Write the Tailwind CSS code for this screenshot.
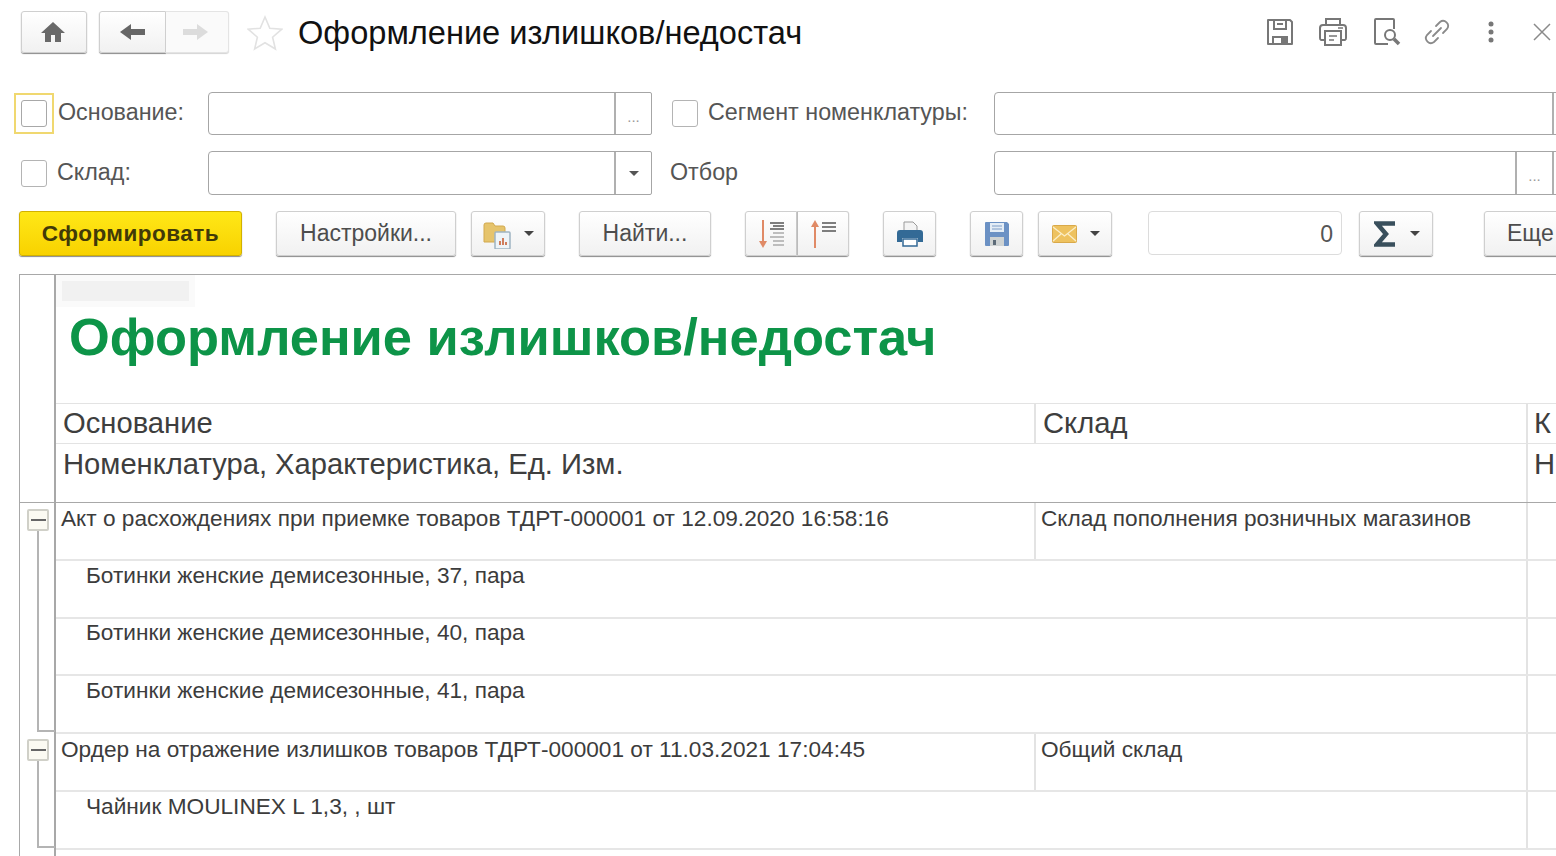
<!DOCTYPE html>
<html lang="ru">
<head>
    <meta charset="UTF-8">
    <meta name="viewport" content="width=device-width, initial-scale=1.0">
    <title>Оформление излишков/недостач</title>
    <script src="https://cdn.jsdelivr.net/npm/@tailwindcss/browser@4"></script>
</head>
<body class="bg-white">
<div class="w-[1556px] h-[856px] overflow-hidden font-['Liberation_Sans',Arial,sans-serif] text-[#3a3a3a]">

    <!-- Заголовок -->
    <div class="h-[92px] pt-[11px] pl-[21px] flex items-start">
        <button class="w-[66px] h-[42px] rounded-[3px] border border-[#cfcfcf] bg-linear-to-b from-white to-[#f1f1f1] shadow-[0_1px_1px_#8a8a8a] flex items-center justify-center pr-[2px]">
            <svg width="26" height="26" viewBox="0 0 26 26"><path d="M13 3 1 14h4v9h6v-7h4v7h6v-9h4z" fill="#696969"/></svg>
        </button>
        <div class="ml-[12px] flex">
            <button class="w-[67px] h-[42px] rounded-l-[3px] border border-[#cfcfcf] bg-linear-to-b from-white to-[#f1f1f1] shadow-[0_1px_1px_#8a8a8a] flex items-center justify-center">
                <svg width="26" height="20" viewBox="0 0 26 20"><path d="M0 10 11 2v5h14v6H11v5z" fill="#666"/></svg>
            </button>
            <button class="w-[63px] h-[42px] rounded-r-[3px] border border-l-0 border-[#e4e4e4] bg-[#fafafa] shadow-[0_1px_1px_#d4d4d4] flex items-center justify-center pr-[4px]">
                <svg width="26" height="20" viewBox="0 0 26 20"><path d="M26 10 15 2v5H1v6h14v5z" fill="#dcdcdc"/></svg>
            </button>
        </div>
        <svg class="ml-[18px] mt-[4px]" width="36" height="36" viewBox="0 0 36 36"><path d="m18 2 4.800 11.200 12 1-9.200 8 2.800 11.800L18 27.700 7.600 34l2.800-11.800-9.200-8 12-1z" fill="none" stroke="#e2e2e2" stroke-width="1.600"/></svg>
        <h1 class="ml-[15px] mt-[2px] text-[32.600px] leading-[40px] text-[#111] whitespace-nowrap">Оформление излишков/недостач</h1>
        <div class="ml-auto flex items-center h-[42px] relative">
            <svg class="absolute left-[-291px] top-[6px]" width="30" height="30" viewBox="0 0 30 30" fill="none" stroke="#777" stroke-width="2"><path d="M3 3h22l2 2v22H3z" stroke-linejoin="round"/><path d="M9 3v9h12V3M12 7h6" /><path d="M8 27v-7h14v7" /><rect x="12" y="22" width="4" height="4" fill="#fff" stroke="none"/><rect x="16" y="21" width="5" height="6" fill="#777" stroke="none"/></svg>
            <svg class="absolute left-[-238px] top-[6px]" width="30" height="30" viewBox="0 0 30 30" fill="none" stroke="#777" stroke-width="2"><path d="M8 8V2h14v6" /><path d="M7 23H3a2 2 0 0 1-1-2V11q0-3 3-3h20q3 0 3 3v10a2 2 0 0 1-1 2h-4" /><rect x="7" y="14" width="16" height="14" /><path d="M11 19h8M11 23h5M20 11h5" stroke-width="1.500"/></svg>
            <svg class="absolute left-[-184px] top-[6px]" width="30" height="30" viewBox="0 0 30 30" fill="none" stroke="#777" stroke-width="2"><path d="M22 12V3q0-1-1-1H4q-1 0-1 1v23q0 1 1 1h12" /><circle cx="18" cy="18" r="5" /><path d="m22 22 5 5" stroke-width="3.500"/></svg>
            <svg class="absolute left-[-134px] top-[6px]" width="30" height="30" viewBox="0 0 30 30" fill="none" stroke="#8a8a8a" stroke-width="1.800" stroke-linecap="round"><path d="M11 19 19 11" /><path d="m14 9 4-4a5 5 0 0 1 7 7l-4 4" /><path d="m16 21-4 4a5 5 0 0 1-7-7l4-4" /></svg>
            <svg class="absolute left-[-75px] top-[8px]" width="20" height="24" viewBox="0 0 20 24" fill="#777"><circle cx="10" cy="5" r="2.500"/><circle cx="10" cy="13" r="2.500"/><circle cx="10" cy="21" r="2.500"/></svg>
            <svg class="absolute left-[-24px] top-[11px]" width="20" height="20" viewBox="0 0 20 20" stroke="#8a8a8a" stroke-width="1.500"><path d="m2 2 16 16M18 2 2 18"/></svg>
        </div>
    </div>

    <!-- Отбор -->
    <div class="h-[59px] flex items-start">
        <div class="ml-[14px] w-[40px] h-[41px] mt-[1px] border-2 border-[#f0d870] flex items-center justify-center shrink-0">
            <span class="block w-[26px] h-[27px] rounded-[3px] border border-[#a8a8a8] bg-white"></span>
        </div>
        <span class="ml-[4px] w-[150px] mt-[7px] text-[23.300px] leading-[27px] text-[#555] shrink-0">Основание:</span>
        <div class="w-[444px] h-[43px] rounded-l-[4px] border border-[#a6a6a6] rounded-r-[2px] flex justify-end shrink-0">
            <div class="w-[37px] border-l-2 border-[#b0b0b0] text-[#999] text-[15px] text-center leading-[48px]">...</div>
        </div>
        <span class="ml-[20px] mt-[8px] block w-[26px] h-[27px] rounded-[3px] border border-[#b4b4b4] shrink-0"></span>
        <span class="ml-[10px] w-[286px] mt-[7px] text-[23.300px] leading-[27px] text-[#555] shrink-0">Сегмент номенклатуры:</span>
        <div class="w-[600px] h-[43px] rounded-l-[4px] border border-[#a6a6a6] flex justify-end shrink-0">
            <div class="w-[41px] border-l-2 border-[#b0b0b0]"></div>
        </div>
    </div>
    <div class="h-[60px] flex items-start">
        <span class="ml-[21px] mt-[9px] block w-[26px] h-[27px] rounded-[3px] border border-[#b4b4b4] shrink-0"></span>
        <span class="ml-[10px] w-[151px] mt-[8px] text-[23.300px] leading-[27px] text-[#555] shrink-0">Склад:</span>
        <div class="w-[444px] h-[44px] rounded-l-[4px] rounded-r-[2px] border border-[#a6a6a6] flex justify-end shrink-0">
            <div class="w-[37px] border-l-2 border-[#b0b0b0] flex items-center justify-center">
                <span class="w-0 h-0 border-x-[5px] border-x-transparent border-t-[5px] border-t-[#555]"></span>
            </div>
        </div>
        <span class="ml-[18px] w-[324px] mt-[8px] text-[23.300px] leading-[27px] text-[#555] shrink-0">Отбор</span>
        <div class="w-[600px] h-[44px] rounded-l-[4px] border border-[#a6a6a6] flex justify-end shrink-0">
            <div class="w-[37px] border-l-2 border-[#b0b0b0] text-[#999] text-[15px] text-center leading-[48px]">...</div>
            <div class="w-[41px] border-l-2 border-[#b0b0b0]"></div>
        </div>
    </div>

    <!-- Командная панель -->
    <div class="h-[63px] pl-[19px] flex items-start">
        <button class="w-[223px] h-[45px] shrink-0 rounded-[3px] border border-[#d2b100] bg-linear-to-b from-[#ffe816] to-[#f8d200] shadow-[0_1px_1px_#8a8a8a] font-bold text-[22.500px] tracking-[0.500px] text-[#413a08]">Сформировать</button>
        <button class="ml-[34px] w-[180px] h-[45px] shrink-0 rounded-[3px] border border-[#cfcfcf] bg-linear-to-b from-white to-[#f1f1f1] shadow-[0_1px_1px_#8a8a8a] text-[23px] text-[#4d4d4d]">Настройки...</button>
        <button class="ml-[15px] w-[74px] h-[45px] shrink-0 rounded-[3px] border border-[#cfcfcf] bg-linear-to-b from-white to-[#f1f1f1] shadow-[0_1px_1px_#8a8a8a] flex items-center pl-[11px] gap-[11px]">
            <svg width="30" height="30" viewBox="0 0 30 30"><path d="M1 6q0-2 2-2h7l2 3h8q2 0 2 2v14H1z" fill="#e6c46c" stroke="#d2a94e"/><rect x="12" y="13" width="15" height="17" rx="1" fill="#eef4f8" stroke="#9fb4c2" stroke-width="1.500"/><path d="M16 26v-4h2v4zM19 26v-7h2v7zM22 26v-3h2v3z" fill="#cf7d5d"/></svg>
            <span class="w-0 h-0 border-x-[5px] border-x-transparent border-t-[5px] border-t-[#444]"></span>
        </button>
        <button class="ml-[34px] w-[132px] h-[45px] shrink-0 rounded-[3px] border border-[#cfcfcf] bg-linear-to-b from-white to-[#f1f1f1] shadow-[0_1px_1px_#8a8a8a] text-[23px] text-[#4d4d4d]">Найти...</button>
        <div class="ml-[34px] flex shrink-0">
            <button class="w-[52px] h-[45px] rounded-l-[3px] border border-[#cfcfcf] bg-linear-to-b from-white to-[#f1f1f1] shadow-[0_1px_1px_#8a8a8a] flex items-center justify-center">
                <svg width="28" height="30" viewBox="0 0 28 30"><path d="M6 1v25" stroke="#e08a66" stroke-width="2"/><path d="m2 22 4 7 4-7z" fill="#e08a66"/><path d="M13 4h14M16 7h11M13 10h14" stroke="#555" stroke-width="1.600"/><path d="M16 14h11M13 18h14M16 22h11M16 26h11" stroke="#aaa" stroke-width="1.600"/></svg>
            </button>
            <button class="w-[52px] h-[45px] rounded-r-[3px] border border-l-[#bbb] border-[#cfcfcf] bg-linear-to-b from-white to-[#f1f1f1] shadow-[0_1px_1px_#8a8a8a] flex items-center justify-center">
                <svg width="28" height="30" viewBox="0 0 28 30"><path d="M6 29V4" stroke="#e08a66" stroke-width="2"/><path d="m2 8 4-7 4 7z" fill="#e08a66"/><path d="M13 4h14M13 8h14M13 12h14" stroke="#555" stroke-width="1.600"/></svg>
            </button>
        </div>
        <button class="ml-[34px] w-[53px] h-[45px] shrink-0 rounded-[3px] border border-[#cfcfcf] bg-linear-to-b from-white to-[#f1f1f1] shadow-[0_1px_1px_#8a8a8a] flex items-center justify-center">
            <svg width="28" height="28" viewBox="0 0 28 28"><path d="M8 12V2h9l4 4v6z" fill="#f4f4f4" stroke="#9a9a9a"/><path d="M1 13q0-3 3-3h20q3 0 3 3v9h-5v-4H6v4H1z" fill="#336a96"/><path d="M7 19h14v7H7z" fill="#fff" stroke="#336a96" stroke-width="1.500"/></svg>
        </button>
        <button class="ml-[34px] w-[53px] h-[45px] shrink-0 rounded-[3px] border border-[#cfcfcf] bg-linear-to-b from-white to-[#f1f1f1] shadow-[0_1px_1px_#8a8a8a] flex items-center justify-center">
            <svg width="26" height="26" viewBox="0 0 26 26"><path d="M1 2q0-1 1-1h21l2 2v21q0 1-1 1H2q-1 0-1-1z" fill="#6b91c4"/><rect x="6" y="2" width="14" height="9" fill="#e4edf6"/><path d="M8 5h10M8 8h10" stroke="#7d9cc6"/><rect x="6" y="16" width="14" height="9" fill="#cfd3d3"/><rect x="9" y="19" width="3" height="5" fill="#5d6b78"/></svg>
        </button>
        <button class="ml-[15px] w-[74px] h-[45px] shrink-0 rounded-[3px] border border-[#cfcfcf] bg-linear-to-b from-white to-[#f1f1f1] shadow-[0_1px_1px_#8a8a8a] flex items-center pl-[13px] gap-[13px]">
            <svg width="25" height="18" viewBox="0 0 25 18"><rect x="0.500" y="0.500" width="24" height="17" rx="1" fill="#eec25f" stroke="#d9a94a"/><path d="m1 2 11.500 9L24 2M1 16l8-7M24 16l-8-7" fill="none" stroke="#fbeec8" stroke-width="1.300"/></svg>
            <span class="w-0 h-0 border-x-[5px] border-x-transparent border-t-[5px] border-t-[#444]"></span>
        </button>
        <div class="ml-[36px] w-[194px] h-[44px] shrink-0 rounded-[4px] border border-[#dcdcdc] text-right pr-[8px] text-[23px] leading-[44px] text-[#555]">0</div>
        <button class="ml-[17px] w-[74px] h-[45px] shrink-0 rounded-[3px] border border-[#cfcfcf] bg-linear-to-b from-white to-[#f1f1f1] shadow-[0_1px_1px_#8a8a8a] flex items-center pl-[14px] gap-[14px]">
            <svg width="22" height="26" viewBox="0 0 22 26"><path d="M21 2.500H3l9 10.500-9 10.500h18" fill="none" stroke="#394f5c" stroke-width="4.500"/></svg>
            <span class="w-0 h-0 border-x-[5px] border-x-transparent border-t-[5px] border-t-[#444]"></span>
        </button>
        <button class="ml-[51px] w-[90px] h-[45px] shrink-0 rounded-[3px] border border-[#cfcfcf] bg-linear-to-b from-white to-[#f1f1f1] shadow-[0_1px_1px_#8a8a8a] text-[23px] text-[#4d4d4d] text-left pl-[22px]">Еще</button>
    </div>

    <!-- Отчет -->
    <div class="ml-[19px] w-[1560px] border-t border-[#a8a8a8]">
        <div class="flex h-[128px]">
            <div class="w-[37px] border-l border-r-2 border-[#a8a8a8] shrink-0"></div>
            <div class="flex-1 relative">
                <div class="w-[139px] h-[32px] bg-[#fafafa] p-[6px]"><div class="h-full bg-[#f1f1f1]"></div></div>
                <div class="mt-[1px] pl-[13px] text-[52.450px] leading-[58px] font-bold text-[#0d9448] whitespace-nowrap">Оформление излишков/недостач</div>
            </div>
        </div>
        <div class="flex h-[41px]">
            <div class="w-[37px] border-l border-r-2 border-[#a8a8a8] shrink-0"></div>
            <div class="flex-1 flex border-y border-[#e3e3e3] text-[29.200px] leading-[38px] text-[#3e3e3e]">
                <div class="w-[978px] pl-[7px]">Основание</div>
                <div class="w-[492px] pl-[7px] border-l-2 border-[#e3e3e3]">Склад</div>
                <div class="flex-1 pl-[6px] border-l-2 border-[#e3e3e3]">К</div>
            </div>
        </div>
        <div class="flex h-[59px] border-b border-[#a8a8a8]">
            <div class="w-[37px] border-l border-r-2 border-[#a8a8a8] shrink-0"></div>
            <div class="flex-1 flex text-[29.200px] leading-[40px] text-[#3e3e3e]">
                <div class="w-[1470px] pl-[7px]">Номенклатура, Характеристика, Ед. Изм.</div>
                <div class="flex-1 pl-[6px] border-l-2 border-[#e3e3e3]">Н</div>
            </div>
        </div>

        <!-- Акт о расхождениях -->
        <div class="flex h-[58px]">
            <div class="w-[37px] border-l border-r-2 border-[#a8a8a8] shrink-0 relative">
                <span class="absolute left-[7px] top-[6px] w-[22px] h-[22px] rounded-[2px] border-2 border-[#d0d0c8] bg-[#fbfaf2] flex items-center justify-center"><span class="w-[15px] h-[2px] bg-[#666]"></span></span>
                <span class="absolute left-[17px] top-[28px] w-[2px] h-[30px] bg-[#b4b4b4]"></span>
            </div>
            <div class="flex-1 flex border-b-2 border-[#e6e6e6] text-[22.650px] leading-[30px] text-[#3c3c3c]">
                <div class="w-[978px] pl-[5px]">Акт о расхождениях при приемке товаров ТДРТ-000001 от 12.09.2020 16:58:16</div>
                <div class="w-[492px] pl-[5px] border-l-2 border-[#e3e3e3]">Склад пополнения розничных магазинов</div>
                <div class="flex-1 border-l-2 border-[#e3e3e3]"></div>
            </div>
        </div>
        <div class="flex h-[58px]">
            <div class="w-[37px] border-l border-r-2 border-[#a8a8a8] shrink-0 relative"><span class="absolute left-[17px] top-0 w-[2px] h-full bg-[#b4b4b4]"></span></div>
            <div class="flex-1 flex border-b-2 border-[#e6e6e6] text-[22.650px] leading-[28px] text-[#3c3c3c]">
                <div class="w-[1470px] pl-[30px]">Ботинки женские демисезонные, 37, пара</div>
                <div class="flex-1 border-l-2 border-[#e3e3e3]"></div>
            </div>
        </div>
        <div class="flex h-[57px]">
            <div class="w-[37px] border-l border-r-2 border-[#a8a8a8] shrink-0 relative"><span class="absolute left-[17px] top-0 w-[2px] h-full bg-[#b4b4b4]"></span></div>
            <div class="flex-1 flex border-b-2 border-[#e6e6e6] text-[22.650px] leading-[26px] text-[#3c3c3c]">
                <div class="w-[1470px] pl-[30px]">Ботинки женские демисезонные, 40, пара</div>
                <div class="flex-1 border-l-2 border-[#e3e3e3]"></div>
            </div>
        </div>
        <div class="flex h-[58px]">
            <div class="w-[37px] border-l border-r-2 border-[#a8a8a8] shrink-0 relative"><span class="absolute left-[17px] top-0 w-[2px] h-[56px] bg-[#b4b4b4]"></span><span class="absolute left-[17px] top-[54px] w-[18px] h-[2px] bg-[#b4b4b4]"></span></div>
            <div class="flex-1 flex border-b-2 border-[#e6e6e6] text-[22.650px] leading-[28px] text-[#3c3c3c]">
                <div class="w-[1470px] pl-[30px]">Ботинки женские демисезонные, 41, пара</div>
                <div class="flex-1 border-l-2 border-[#e3e3e3]"></div>
            </div>
        </div>

        <!-- Ордер на отражение -->
        <div class="flex h-[58px]">
            <div class="w-[37px] border-l border-r-2 border-[#a8a8a8] shrink-0 relative">
                <span class="absolute left-[7px] top-[5px] w-[22px] h-[22px] rounded-[2px] border-2 border-[#d0d0c8] bg-[#fbfaf2] flex items-center justify-center"><span class="w-[15px] h-[2px] bg-[#666]"></span></span>
                <span class="absolute left-[17px] top-[27px] w-[2px] h-[31px] bg-[#b4b4b4]"></span>
            </div>
            <div class="flex-1 flex border-b-2 border-[#e6e6e6] text-[22.650px] leading-[30px] text-[#3c3c3c]">
                <div class="w-[978px] pl-[5px]">Ордер на отражение излишков товаров ТДРТ-000001 от 11.03.2021 17:04:45</div>
                <div class="w-[492px] pl-[5px] border-l-2 border-[#e3e3e3]">Общий склад</div>
                <div class="flex-1 border-l-2 border-[#e3e3e3]"></div>
            </div>
        </div>
        <div class="flex h-[58px]">
            <div class="w-[37px] border-l border-r-2 border-[#a8a8a8] shrink-0 relative"><span class="absolute left-[17px] top-0 w-[2px] h-[56px] bg-[#b4b4b4]"></span><span class="absolute left-[17px] top-[54px] w-[18px] h-[2px] bg-[#b4b4b4]"></span></div>
            <div class="flex-1 flex border-b-2 border-[#e6e6e6] text-[22.650px] leading-[28px] text-[#3c3c3c]">
                <div class="w-[1470px] pl-[30px]">Чайник MOULINEX L 1,3, , шт</div>
                <div class="flex-1 border-l-2 border-[#e3e3e3]"></div>
            </div>
        </div>
        <div class="flex h-[20px]">
            <div class="w-[37px] border-l border-r-2 border-[#a8a8a8] shrink-0"></div>
        </div>
    </div>
</div>
</body>
</html>
